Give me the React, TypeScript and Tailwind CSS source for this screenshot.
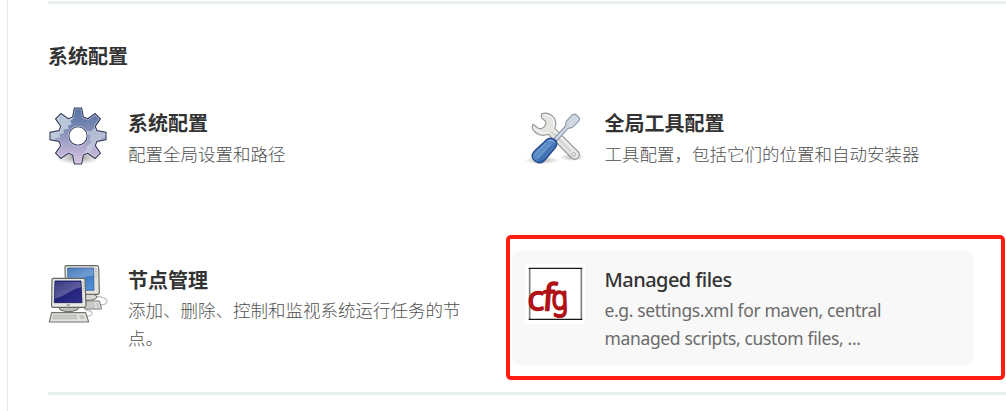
import type { ReactNode } from "react";

function gearPath(cx: number, cy: number) {
  const points: string[] = [];
  for (let i = 0; i < 8; i++) {
    const a = (i * Math.PI) / 4;
    const corners = [
      [-16, -57],
      [-11, -84],
      [11, -84],
      [16, -57],
    ];
    for (const [x, y] of corners) {
      const px = cx + x * Math.cos(a) - y * Math.sin(a);
      const py = cy + x * Math.sin(a) + y * Math.cos(a);
      points.push(`${px.toFixed(1)} ${py.toFixed(1)}`);
    }
  }
  return `M${points.join("L")}ZM141 114a27 27 0 1 0-54 0a27 27 0 1 0 54 0Z`;
}

function GearIcon() {
  const d = gearPath(114, 114);
  return (
    <svg className="size-[60px]" viewBox="24 24 180 180">
      <defs>
        <linearGradient id="gear" x1="0" y1="0" x2="0" y2="1">
          <stop offset="0" stopColor="#53709f" />
          <stop offset="0.35" stopColor="#7888b4" />
          <stop offset="0.65" stopColor="#a9a6cb" />
          <stop offset="1" stopColor="#d9c3e3" />
        </linearGradient>
        <radialGradient id="gearShade">
          <stop offset="0" stopColor="#777" stopOpacity="0.75" />
          <stop offset="1" stopColor="#777" stopOpacity="0" />
        </radialGradient>
        <clipPath id="gearClip">
          <path d={d} clipRule="evenodd" />
        </clipPath>
      </defs>
      <ellipse cx="114" cy="178" rx="68" ry="22" fill="url(#gearShade)" />
      <circle cx="114" cy="114" r="29" fill="#fff" />
      <path d={d} fill="url(#gear)" fillRule="evenodd" />
      <g clipPath="url(#gearClip)" fill="#c6d2e1" fillOpacity="0.85">
        <path d="M30 36h64l5 26-8 7 4 10-12 5 4 8-17 3 2 10-14 4 3 9-16 3-3 14H24Z" />
        <path d="M200 80l-40 12-7 8-12-2-4 10 14 3-3 14 8 6-13 12-9 22-3 34 10-8 7-25 16-25 18-18 24-14Z" fillOpacity="0.65" />
      </g>
      <path d={d} fill="none" stroke="#e8ebf5" strokeOpacity="0.55" strokeWidth="8" clipPath="url(#gearClip)" />
      <path d={d} fill="none" stroke="#39415f" strokeWidth="3.5" strokeLinejoin="round" />
      <circle cx="114" cy="114" r="25.5" fill="#fff" />
    </svg>
  );
}

function ToolsIcon() {
  return (
    <svg className="size-[60px]" viewBox="12 24 180 180">
      <defs>
        <linearGradient id="handle" x1="0" y1="0" x2="1" y2="1">
          <stop offset="0" stopColor="#3468ac" />
          <stop offset="0.45" stopColor="#5c8cc8" />
          <stop offset="0.65" stopColor="#3265aa" />
          <stop offset="1" stopColor="#204a87" />
        </linearGradient>
        <radialGradient id="toolShade">
          <stop offset="0" stopColor="#666" stopOpacity="0.5" />
          <stop offset="1" stopColor="#666" stopOpacity="0" />
        </radialGradient>
      </defs>
      <ellipse cx="62" cy="187" rx="52" ry="12" fill="url(#toolShade)" />
      <ellipse cx="154" cy="178" rx="38" ry="11" fill="url(#toolShade)" />
      <path
        d="M61 48C75 42 94 48 101 62C106 73 105 82 101 91L172 162C183 174 165 191 152 180L82 109C66 116 47 111 38 98C33 91 33 84 36 79L52 91C58 94 69 90 72 82C77 75 75 69 69 66L61 59Z"
        fill="#e5e5e3"
        stroke="#989a96"
        strokeWidth="3.5"
        strokeLinejoin="round"
      />
      <path d="M70 51C83 49 95 57 98 68C101 78 98 85 96 92L168 164M40 88C48 101 66 107 82 104" fill="none" stroke="#fafafa" strokeWidth="3" />
      <path d="M91 101L149 160" stroke="#d0d0ce" strokeWidth="5" />
      <circle cx="158" cy="169" r="5" fill="#fff" stroke="#8f918d" strokeWidth="2.5" />
      <path
        d="M99 121L134 84L135 71L154 50L163 48L176 61L173 70L153 89L141 91L107 129Z"
        fill="#ced7e2"
        stroke="#8f9bab"
        strokeWidth="3.5"
        strokeLinejoin="round"
      />
      <path d="M105 123L145 82L167 62" fill="none" stroke="#e3e9f0" strokeWidth="2" />
      <path
        d="M79 123C88 119 98 122 104 128C109 135 109 143 102 150L71 187C60 200 45 195 37 184C30 174 34 165 43 157Z"
        fill="url(#handle)"
        stroke="#204a87"
        strokeWidth="4"
      />
      <path d="M82 128C90 125 96 128 99 133M43 168L75 136M51 179L87 140" fill="none" stroke="#86aedd" strokeWidth="3" strokeLinecap="round" />
      <path d="M66 184L98 148" stroke="#5e8dc8" strokeWidth="3" />
    </svg>
  );
}

function ComputersIcon() {
  return (
    <svg className="size-[60px]" viewBox="24 24 180 180">
      <defs>
        <linearGradient id="backScreen" x1="0" y1="0" x2="0.4" y2="1">
          <stop offset="0" stopColor="#2d66b0" />
          <stop offset="1" stopColor="#4d8bd3" />
        </linearGradient>
        <linearGradient id="frontScreen" x1="0" y1="0" x2="1" y2="1">
          <stop offset="0" stopColor="#171768" />
          <stop offset="1" stopColor="#30308e" />
        </linearGradient>
        <linearGradient id="glare" x1="0" y1="0" x2="1" y2="1">
          <stop offset="0" stopColor="#fff" stopOpacity="0.15" />
          <stop offset="1" stopColor="#fff" stopOpacity="0.32" />
        </linearGradient>
      </defs>
      <path d="M167 121C185 122 201 127 201 136C199 145 189 147 180 146M137 162C151 163 158 168 156 174C153 180 147 181 141 180" fill="none" stroke="#c2c2c2" strokeWidth="4" />
      <path d="M132 135H178L185 159H134Z" fill="#dededb" stroke="#777973" strokeWidth="3" />
      <path d="M138 141H162M140 147H164M142 153H165M170 141L175 154" stroke="#aaa" strokeWidth="2.5" />
      <ellipse cx="144" cy="123" rx="27" ry="10" fill="#d5d5d1" stroke="#666" strokeWidth="3" />
      <path d="M78 29H171Q176 29 176 35L178 109Q178 115 172 115H80Q77 115 77 110L75 34Q75 29 78 29Z" fill="#e4e4df" stroke="#686b65" strokeWidth="3.5" />
      <path d="M83 36H161L162 103H84Z" fill="url(#backScreen)" stroke="#244f8f" strokeWidth="2" />
      <path d="M84 37H160V58C130 60 117 78 84 81Z" fill="url(#glare)" />
      <path d="M168 39V66" stroke="#a4a49e" strokeWidth="3" strokeDasharray="3 3" />
      <path d="M57 151H116L113 161Q86 173 59 161Z" fill="#bfc0ba" stroke="#656862" strokeWidth="3" />
      <path d="M40 67H131Q135 67 135 73L138 149Q138 154 132 154H39Q35 154 35 149L36 72Q36 67 40 67Z" fill="#e8e8e3" stroke="#656862" strokeWidth="3.5" />
      <path d="M45 75H123L126 140H43Z" fill="url(#frontScreen)" stroke="#171760" strokeWidth="2.5" />
      <path d="M46 77H122L123 94C89 101 78 121 44 128Z" fill="url(#glare)" />
      <path d="M130 78V105" stroke="#a4a49e" strokeWidth="3" strokeDasharray="3 3" />
      <path d="M80 147H90" stroke="#555" strokeWidth="2.5" />
      <path d="M35 170H137L146 198H28Z" fill="#e3e3df" stroke="#73756f" strokeWidth="3.5" strokeLinejoin="round" />
      <path d="M40 176H110L113 190H36Z" fill="#b7b8b3" />
      <path d="M39 181H112M37 186H113M116 176H132L137 190H119Z" fill="#c5c5c0" stroke="#ecece8" strokeWidth="1.5" />
    </svg>
  );
}

function ConfigIcon() {
  return (
    <svg className="size-[60px] bg-white" viewBox="24 18 180 180">
      <path d="M38 30V185M193 30V185" stroke="#808080" strokeWidth="5" />
      <path d="M35 31H196M35 184H196" stroke="#171717" strokeWidth="3.5" />
      <g
        fill="#b11218"
        stroke="#b11218"
        strokeWidth="7"
        strokeLinejoin="round"
        className="font-['Noto_Sans',sans-serif] text-[100px] font-light"
      >
        <text transform="translate(32 155) scale(1.02 1)">c</text>
        <text transform="translate(76 155) skewX(-4) scale(1.08 1.08)">f</text>
        <text transform="translate(105 153) skewX(2) scale(0.82 0.98)">g</text>
      </g>
    </svg>
  );
}

type ItemProps = {
  icon: ReactNode;
  title: string;
  latin?: boolean;
  textClass?: string;
  bodyClass?: string;
  children: ReactNode;
};

function Item({ icon, title, latin, textClass = "", bodyClass = "", children }: ItemProps) {
  return (
    <a className={`flex h-[114px] w-[461px] rounded-[9px] p-[13px] ${latin ? "bg-[#f8f8f8]" : ""}`}>
      <div className="shrink-0">{icon}</div>
      <dl className={`flex-1 whitespace-nowrap ${textClass}`}>
        <dt className={`text-[20px] leading-8 text-[#333] ${latin ? "font-medium tracking-[-0.56px]" : "font-bold"}`}>{title}</dt>
        <dd className={`text-[17.5px] leading-7 ${latin ? "text-[#6b6b6b] tracking-[-0.35px]" : "font-light text-[#505050]"} ${bodyClass}`}>{children}</dd>
      </dl>
    </a>
  );
}

export default function App() {
  return (
    <main className="relative flex h-[411px] w-[1006px] overflow-hidden bg-white font-['Noto_Sans','Noto_Sans_CJK_SC',sans-serif]">
      <div className="ml-[7px] w-px shrink-0 bg-[#ebebeb]" />
      <section className="ml-10 flex-1 pt-px">
        <div className="h-[3px] bg-[#e9eef1]" />
        <h2 className="mt-[37px] h-[52px] text-[20px] leading-8 font-bold text-[#333]">系统配置</h2>
        <div className="-ml-[13px] grid grid-cols-[461px_461px] gap-x-4 gap-y-11">
          <Item icon={<GearIcon />} title="系统配置" textClass="ml-5 pt-0.5">配置全局设置和路径</Item>
          <Item icon={<ToolsIcon />} title="全局工具配置" textClass="ml-[19.5px] pt-0.5">工具配置，包括它们的位置和自动安装器</Item>
          <Item icon={<ComputersIcon />} title="节点管理" textClass="ml-5 pt-px" bodyClass="-mt-px">
            添加、删除、控制和监视系统运行任务的节
            <br />
            点。
          </Item>
          <Item icon={<ConfigIcon />} title="Managed files" textClass="ml-[19.5px]" latin>
            e.g. settings.xml for maven, central
            <br />
            managed scripts, custom files, ...
          </Item>
        </div>
        <div className="mt-[27px] h-[3px] bg-[#e9eef1]" />
      </section>
      <div className="pointer-events-none absolute top-[235px] left-[505.5px] h-[145px] w-[499px] rounded-[5px] border-4 border-[#ff1d12]" />
    </main>
  );
}
